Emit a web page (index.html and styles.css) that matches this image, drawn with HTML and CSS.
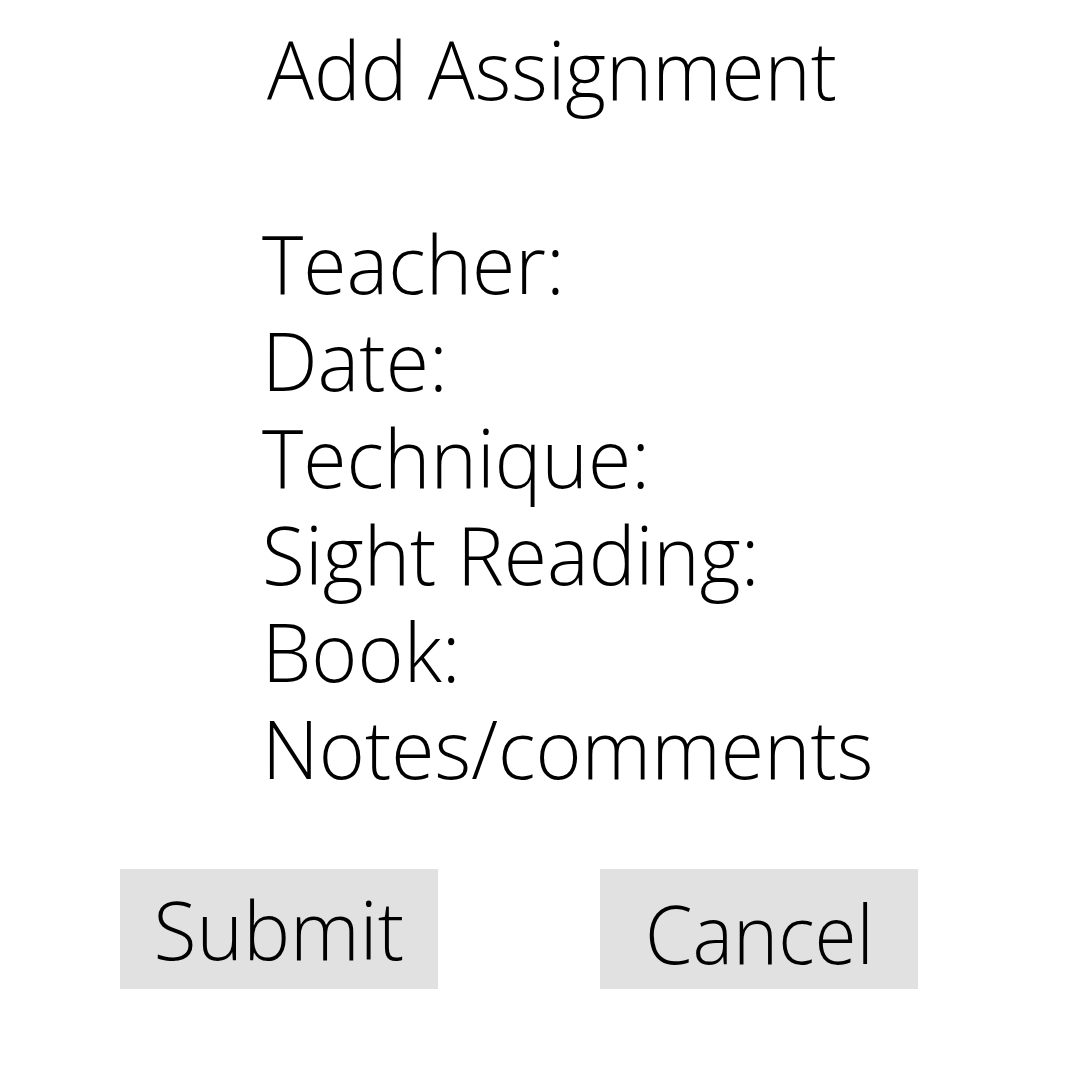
FILE: index.html
```html
<!DOCTYPE html>
<html>
<head>
<meta charset="utf-8">
<title>Add Assignment</title>
<link rel="stylesheet" href="styles.css">
</head>
<body>
<div class="page">
  <div class="form">
    <h1 class="title"><span class="txt txt-title">Add Assignment</span></h1>
    <div class="fields">
      <div class="field"><span class="txt">Teacher:</span></div>
      <div class="field"><span class="txt">Date:</span></div>
      <div class="field"><span class="txt">Technique:</span></div>
      <div class="field"><span class="txt">Sight Reading:</span></div>
      <div class="field"><span class="txt">Book:</span></div>
      <div class="field"><span class="txt">Notes/comments</span></div>
    </div>
  </div>
  <div class="actions">
    <button class="btn btn-submit"><span class="btn-label">Submit</span></button>
    <button class="btn btn-cancel"><span class="btn-label">Cancel</span></button>
  </div>
</div>
</body>
</html>
```

FILE: styles.css
```css
html, body {
  margin: 0;
  padding: 0;
  background: #ffffff;
}

body {
  font-family: "Open Sans", "Liberation Sans", sans-serif;
  font-weight: 300;
  color: #000000;
}

.page {
  width: 1080px;
  height: 1080px;
  display: flex;
  flex-direction: column;
  padding-top: 21px;
  box-sizing: border-box;
}

.form {
  display: flex;
  flex-direction: column;
  padding-left: 262px;
}

.title {
  margin: 0 0 97px 5px;
  font-size: 80.5px;
  font-weight: 300;
  line-height: 97px;
}

.fields {
  display: flex;
  flex-direction: column;
}

.field {
  font-size: 80.5px;
  line-height: 97px;
}

.txt {
  display: inline-block;
  transform: scaleX(0.978);
  transform-origin: left center;
  white-space: nowrap;
}

.txt-title {
  transform: scaleX(0.973);
}

.actions {
  display: flex;
  gap: 162px;
  padding-left: 120px;
  margin-top: 72px;
}

.btn {
  width: 318px;
  height: 120px;
  background: #e1e1e1;
  border: none;
  padding: 0;
  margin: 0;
  font-family: "Open Sans", "Liberation Sans", sans-serif;
  font-weight: 300;
  font-size: 80.5px;
  line-height: 120px;
  color: #000000;
  text-align: center;
}

.btn-label {
  display: inline-block;
  transform: scaleX(0.98);
  transform-origin: center;
}

.btn-cancel {
  padding-top: 4px;
}

.btn-cancel .btn-label {
  transform: scaleX(0.95);
}
```
